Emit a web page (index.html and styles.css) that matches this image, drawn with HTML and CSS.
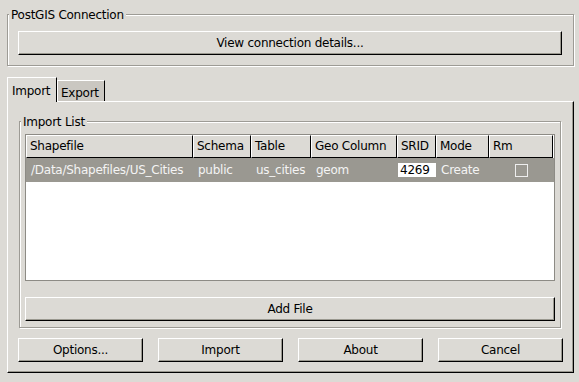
FILE: index.html
```html
<!DOCTYPE html>
<html>
<head>
    <meta charset="utf-8">
    <title>Shapefile Import/Export</title>
    <link rel="stylesheet" href="styles.css">
</head>
<body>
<div class="window">
    <fieldset class="frame conn">
        <legend>PostGIS Connection</legend>
        <button class="btn">View connection details...</button>
    </fieldset>

    <div class="notebook">
        <div class="tabs">
            <div class="tab active">Import</div>
            <div class="tab">Export</div>
        </div>
        <div class="page">
            <fieldset class="frame list">
                <legend>Import List</legend>
                <div class="tree">
                    <div class="tree-head">
                        <div class="cell">Shapefile</div>
                        <div class="cell">Schema</div>
                        <div class="cell">Table</div>
                        <div class="cell">Geo Column</div>
                        <div class="cell">SRID</div>
                        <div class="cell">Mode</div>
                        <div class="cell">Rm</div>
                    </div>
                    <div class="tree-row selected">
                        <div class="cell">/Data/Shapefiles/US_Cities</div>
                        <div class="cell">public</div>
                        <div class="cell">us_cities</div>
                        <div class="cell">geom</div>
                        <div class="cell srid"><span class="srid-input">4269</span></div>
                        <div class="cell">Create</div>
                        <div class="cell rm"><span class="check"></span></div>
                    </div>
                </div>
                <button class="btn add">Add File</button>
            </fieldset>

            <div class="actions">
                <button class="btn">Options...</button>
                <button class="btn">Import</button>
                <button class="btn">About</button>
                <button class="btn">Cancel</button>
            </div>
        </div>
    </div>
</div>
</body>
</html>
```

FILE: styles.css
```css
body {
    margin: 0;
    width: 579px;
    height: 382px;
    overflow: hidden;
    background-color: #dcdad5;
    font-family: "DejaVu Sans", sans-serif;
    font-size: 12px;
    letter-spacing: -0.25px;
    color: #000;
}

/* etched frames */
.frame {
    margin: 7px 5px 0 7px;
    padding: 9px 11px 10px 10px;
    min-width: 0;
    border: 1px solid #9d9b95;
    box-shadow: inset 1px 1px 0 #fff, 1px 1px 0 #fff;
}

.frame legend {
    padding: 2px 2px 0;
    margin-left: -9px;
    line-height: 13px;
    background-color: #dcdad5;
}

.btn {
    display: block;
    width: 100%;
    height: 24px;
    box-sizing: border-box;
    padding: 0;
    background-color: #dcdad5;
    border: 1px solid;
    border-color: #fff #000 #000 #fff;
    box-shadow: inset -1px -1px 0 #9a988f;
    font: inherit;
    letter-spacing: inherit;
    color: #000;
    line-height: 21px;
}

/* notebook */
.notebook {
    margin: 11px 5px 0 7px;
}

.tabs {
    display: flex;
    align-items: flex-end;
    height: 24px;
}

.tab {
    box-sizing: border-box;
    width: 48px;
    height: 21px;
    padding: 5px 0 0 3px;
    line-height: 14px;
    border: 1px solid;
    border-bottom: 0;
    border-color: #fff #000 #000 #fff;
    background-color: #cac7c1;
}

.tab.active {
    position: relative;
    z-index: 1;
    width: 50px;
    height: 25px;
    padding: 6px 0 0 4px;
    margin-bottom: -1px;
    background-color: #dcdad5;
}

.page {
    padding: 12px 12px 10px 11px;
    border: 1px solid;
    border-color: #fff #000 #000 #fff;
    box-shadow: inset -1px -1px 0 #9a988f;
}

.list {
    margin: 0;
    padding: 5px 5px 6px;
}

.list legend {
    margin-left: -4px;
}

/* tree view */
.tree {
    height: 147px;
    box-sizing: border-box;
    border: 1px solid #8d8b85;
    background-color: #fff;
}

.tree-head,
.tree-row {
    display: grid;
    grid-template-columns: 167px 58px 60px 86px 39px 53px 64px;
}

.tree-head .cell {
    height: 23px;
    box-sizing: border-box;
    padding-left: 3px;
    line-height: 21px;
    white-space: nowrap;
    border: 1px solid;
    border-color: #fff #000 #000 #fff;
    background-color: #dcdad5;
}

.tree-row .cell {
    display: flex;
    align-items: center;
    height: 24px;
    padding-left: 5px;
    white-space: nowrap;
}

.tree-row.selected {
    background-color: #9a9891;
    color: #f4f4f4;
}

.tree-row .cell.srid {
    padding-left: 1px;
}

.srid-input {
    box-sizing: border-box;
    width: 38px;
    height: 14px;
    padding-left: 2px;
    line-height: 14px;
    background-color: #fff;
    color: #000;
}

.tree-row .cell.rm {
    justify-content: center;
    padding-left: 0;
}

.check {
    width: 13px;
    height: 13px;
    box-sizing: border-box;
    border: 1px solid #eeeeee;
}

.add {
    margin-top: 16px;
}

.actions {
    display: grid;
    grid-template-columns: repeat(4, 1fr);
    gap: 15px;
    margin: 10px -2px 0 -1px;
}
```
